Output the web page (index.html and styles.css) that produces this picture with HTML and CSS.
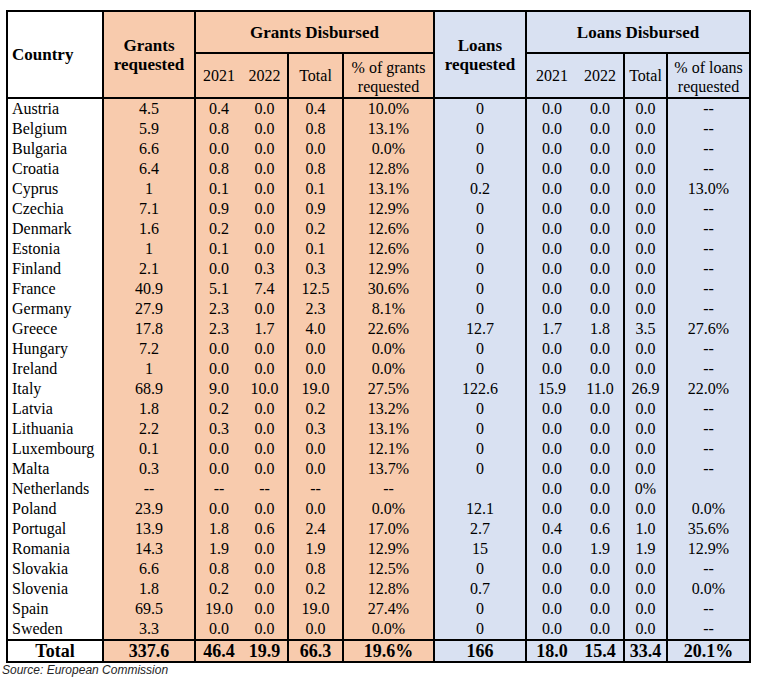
FILE: index.html
```html
<!DOCTYPE html>
<html>
<head>
<meta charset="utf-8">
<link rel="stylesheet" href="styles.css">
</head>
<body>
<div class="wrap">
<table class="rrf">
<colgroup>
<col style="width:96px"><col style="width:92px"><col style="width:47px"><col style="width:46px"><col style="width:55px"><col style="width:91px"><col style="width:92px"><col style="width:51px"><col style="width:47px"><col style="width:43px"><col style="width:83px">
</colgroup>
<thead>
<tr class="h1">
<th rowspan="2" class="hc">Country</th>
<th rowspan="2" class="g bl hb">Grants<br>requested</th>
<th colspan="4" class="g bl bb">Grants Disbursed</th>
<th rowspan="2" class="l bl hb">Loans<br>requested</th>
<th colspan="4" class="l bl bb">Loans Disbursed</th>
</tr>
<tr class="h2">
<th class="g bl sub">2021</th>
<th class="g sub">2022</th>
<th class="g bl sub">Total</th>
<th class="g bl sub two">% of grants<br>requested</th>
<th class="l bl sub">2021</th>
<th class="l sub">2022</th>
<th class="l bl sub">Total</th>
<th class="l bl sub two">% of loans<br>requested</th>
</tr>
</thead>
<tbody class="data">
<tr><td>Austria</td><td>4.5</td><td>0.4</td><td>0.0</td><td>0.4</td><td>10.0%</td><td>0</td><td>0.0</td><td>0.0</td><td>0.0</td><td>--</td></tr>
<tr><td>Belgium</td><td>5.9</td><td>0.8</td><td>0.0</td><td>0.8</td><td>13.1%</td><td>0</td><td>0.0</td><td>0.0</td><td>0.0</td><td>--</td></tr>
<tr><td>Bulgaria</td><td>6.6</td><td>0.0</td><td>0.0</td><td>0.0</td><td>0.0%</td><td>0</td><td>0.0</td><td>0.0</td><td>0.0</td><td>--</td></tr>
<tr><td>Croatia</td><td>6.4</td><td>0.8</td><td>0.0</td><td>0.8</td><td>12.8%</td><td>0</td><td>0.0</td><td>0.0</td><td>0.0</td><td>--</td></tr>
<tr><td>Cyprus</td><td>1</td><td>0.1</td><td>0.0</td><td>0.1</td><td>13.1%</td><td>0.2</td><td>0.0</td><td>0.0</td><td>0.0</td><td>13.0%</td></tr>
<tr><td>Czechia</td><td>7.1</td><td>0.9</td><td>0.0</td><td>0.9</td><td>12.9%</td><td>0</td><td>0.0</td><td>0.0</td><td>0.0</td><td>--</td></tr>
<tr><td>Denmark</td><td>1.6</td><td>0.2</td><td>0.0</td><td>0.2</td><td>12.6%</td><td>0</td><td>0.0</td><td>0.0</td><td>0.0</td><td>--</td></tr>
<tr><td>Estonia</td><td>1</td><td>0.1</td><td>0.0</td><td>0.1</td><td>12.6%</td><td>0</td><td>0.0</td><td>0.0</td><td>0.0</td><td>--</td></tr>
<tr><td>Finland</td><td>2.1</td><td>0.0</td><td>0.3</td><td>0.3</td><td>12.9%</td><td>0</td><td>0.0</td><td>0.0</td><td>0.0</td><td>--</td></tr>
<tr><td>France</td><td>40.9</td><td>5.1</td><td>7.4</td><td>12.5</td><td>30.6%</td><td>0</td><td>0.0</td><td>0.0</td><td>0.0</td><td>--</td></tr>
<tr><td>Germany</td><td>27.9</td><td>2.3</td><td>0.0</td><td>2.3</td><td>8.1%</td><td>0</td><td>0.0</td><td>0.0</td><td>0.0</td><td>--</td></tr>
<tr><td>Greece</td><td>17.8</td><td>2.3</td><td>1.7</td><td>4.0</td><td>22.6%</td><td>12.7</td><td>1.7</td><td>1.8</td><td>3.5</td><td>27.6%</td></tr>
<tr><td>Hungary</td><td>7.2</td><td>0.0</td><td>0.0</td><td>0.0</td><td>0.0%</td><td>0</td><td>0.0</td><td>0.0</td><td>0.0</td><td>--</td></tr>
<tr><td>Ireland</td><td>1</td><td>0.0</td><td>0.0</td><td>0.0</td><td>0.0%</td><td>0</td><td>0.0</td><td>0.0</td><td>0.0</td><td>--</td></tr>
<tr><td>Italy</td><td>68.9</td><td>9.0</td><td>10.0</td><td>19.0</td><td>27.5%</td><td>122.6</td><td>15.9</td><td>11.0</td><td>26.9</td><td>22.0%</td></tr>
<tr><td>Latvia</td><td>1.8</td><td>0.2</td><td>0.0</td><td>0.2</td><td>13.2%</td><td>0</td><td>0.0</td><td>0.0</td><td>0.0</td><td>--</td></tr>
<tr><td>Lithuania</td><td>2.2</td><td>0.3</td><td>0.0</td><td>0.3</td><td>13.1%</td><td>0</td><td>0.0</td><td>0.0</td><td>0.0</td><td>--</td></tr>
<tr><td>Luxembourg</td><td>0.1</td><td>0.0</td><td>0.0</td><td>0.0</td><td>12.1%</td><td>0</td><td>0.0</td><td>0.0</td><td>0.0</td><td>--</td></tr>
<tr><td>Malta</td><td>0.3</td><td>0.0</td><td>0.0</td><td>0.0</td><td>13.7%</td><td>0</td><td>0.0</td><td>0.0</td><td>0.0</td><td>--</td></tr>
<tr><td>Netherlands</td><td>--</td><td>--</td><td>--</td><td>--</td><td>--</td><td></td><td>0.0</td><td>0.0</td><td>0%</td><td></td></tr>
<tr><td>Poland</td><td>23.9</td><td>0.0</td><td>0.0</td><td>0.0</td><td>0.0%</td><td>12.1</td><td>0.0</td><td>0.0</td><td>0.0</td><td>0.0%</td></tr>
<tr><td>Portugal</td><td>13.9</td><td>1.8</td><td>0.6</td><td>2.4</td><td>17.0%</td><td>2.7</td><td>0.4</td><td>0.6</td><td>1.0</td><td>35.6%</td></tr>
<tr><td>Romania</td><td>14.3</td><td>1.9</td><td>0.0</td><td>1.9</td><td>12.9%</td><td>15</td><td>0.0</td><td>1.9</td><td>1.9</td><td>12.9%</td></tr>
<tr><td>Slovakia</td><td>6.6</td><td>0.8</td><td>0.0</td><td>0.8</td><td>12.5%</td><td>0</td><td>0.0</td><td>0.0</td><td>0.0</td><td>--</td></tr>
<tr><td>Slovenia</td><td>1.8</td><td>0.2</td><td>0.0</td><td>0.2</td><td>12.8%</td><td>0.7</td><td>0.0</td><td>0.0</td><td>0.0</td><td>0.0%</td></tr>
<tr><td>Spain</td><td>69.5</td><td>19.0</td><td>0.0</td><td>19.0</td><td>27.4%</td><td>0</td><td>0.0</td><td>0.0</td><td>0.0</td><td>--</td></tr>
<tr><td>Sweden</td><td>3.3</td><td>0.0</td><td>0.0</td><td>0.0</td><td>0.0%</td><td>0</td><td>0.0</td><td>0.0</td><td>0.0</td><td>--</td></tr>
</tbody>
<tfoot class="tot">
<tr><td>Total</td><td>337.6</td><td>46.4</td><td>19.9</td><td>66.3</td><td>19.6%</td><td>166</td><td>18.0</td><td>15.4</td><td>33.4</td><td>20.1%</td></tr>
</tfoot>
</table>
<p class="source">Source: European Commission</p>
</div>
</body>
</html>
```

FILE: styles.css
```css
html, body {
  margin: 0;
  padding: 0;
  background: #ffffff;
}

.wrap {
  padding: 10px 0 0 6px;
  font-family: "Liberation Serif", "Times New Roman", serif;
  color: #000;
}

.rrf {
  border-collapse: collapse;
  table-layout: fixed;
  width: 743px;
  border: 2px solid #000;
}

.rrf th,
.rrf td {
  padding: 0;
  text-align: center;
  vertical-align: middle;
}

.g { background: #f8cbad; }
.l { background: #d9e1f2; }
.bl { border-left: 2px solid #000; }
.bb { border-bottom: 2px solid #000; }

.h1 th {
  height: 40px;
  font-size: 17px;
  font-weight: bold;
  line-height: 19px;
}

.hc {
  text-align: left !important;
  padding-left: 4px !important;
  background: #fff;
  border-bottom: 2px solid #000;
}

.hb {
  border-bottom: 2px solid #000;
}

.h2 th {
  height: 41px;
  font-size: 16px;
  font-weight: normal;
  line-height: 19px;
  border-bottom: 2px solid #000;
}

.h2 .two {
  padding-top: 2px;
}

.data td,
.tot td {
  font-size: 16px;
  line-height: 20px;
  height: 20px;
  border-left: 2px solid #000;
}

.data td:nth-child(1),
.tot td:nth-child(1) {
  border-left: none;
  background: #fff;
}

.data td:nth-child(1) {
  text-align: left;
  padding-left: 4px;
}

.data td:nth-child(4),
.data td:nth-child(9),
.tot td:nth-child(4),
.tot td:nth-child(9) {
  border-left: none;
}

.data td:nth-child(n+2):nth-child(-n+6),
.tot td:nth-child(n+2):nth-child(-n+6) {
  background: #f8cbad;
}

.data td:nth-child(n+7),
.tot td:nth-child(n+7) {
  background: #d9e1f2;
}

.tot td {
  border-top: 2px solid #000;
  font-weight: bold;
  font-size: 18px;
  height: 19px;
}

.source {
  margin: 0 0 0 -4px;
  font-family: "Liberation Sans", Arial, sans-serif;
  font-style: italic;
  font-size: 12px;
  color: #262626;
}
```
